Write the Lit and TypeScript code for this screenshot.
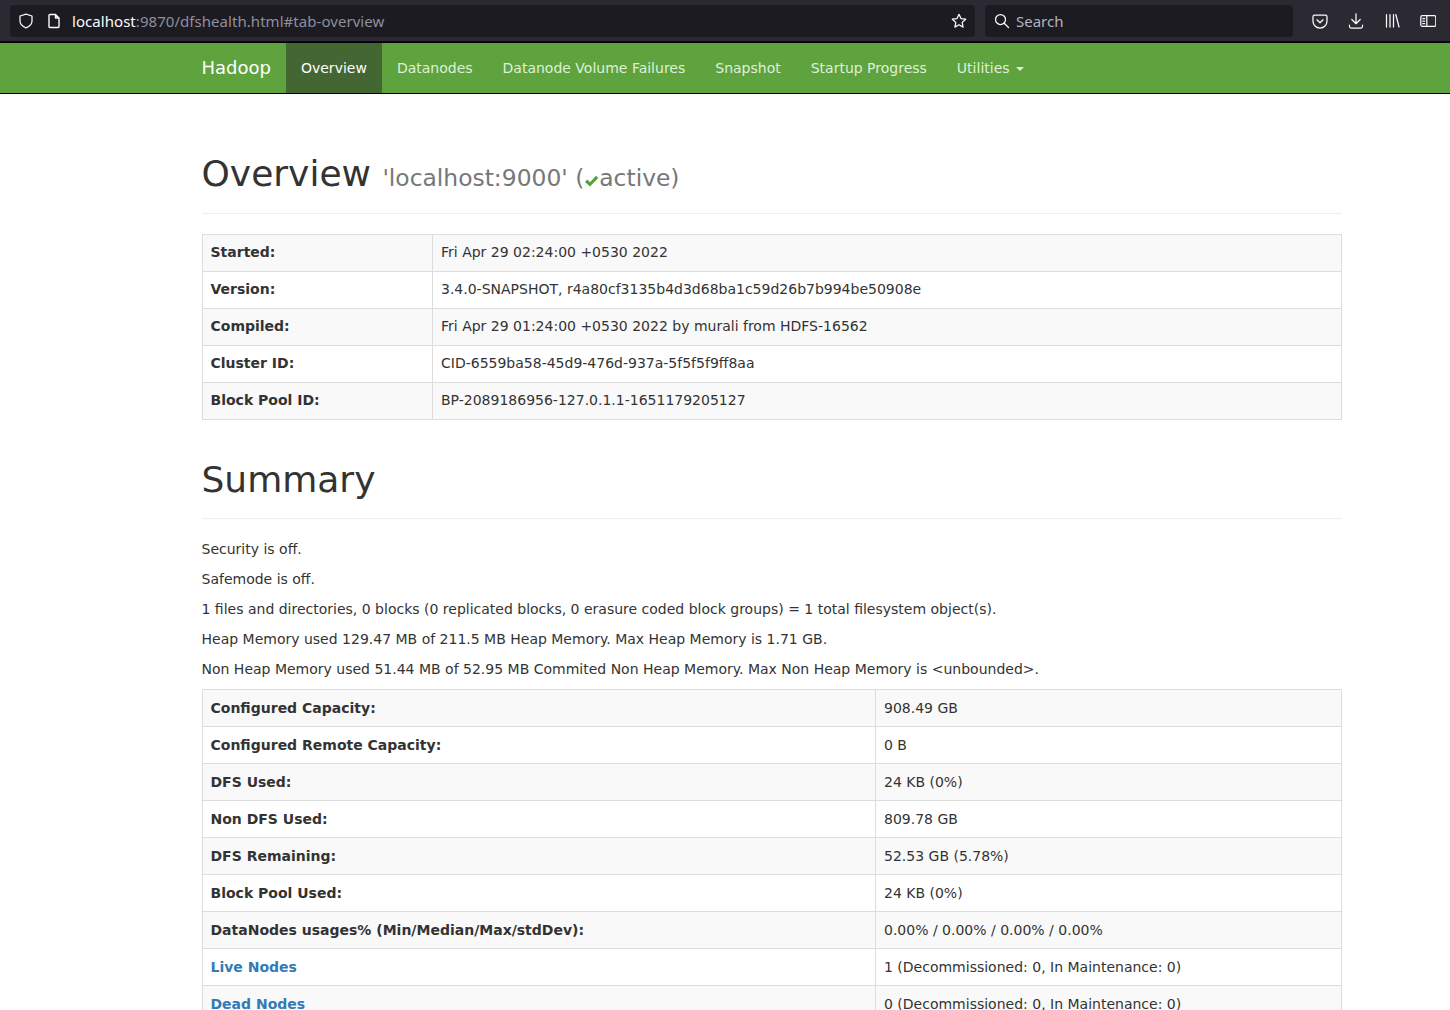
import { LitElement, html, css, svg } from "lit";
import { customElement } from "lit/decorators.js";

const overview: [string, string][] = [
  ["Started:", "Fri Apr 29 02:24:00 +0530 2022"],
  ["Version:", "3.4.0-SNAPSHOT, r4a80cf3135b4d3d68ba1c59d26b7b994be50908e"],
  ["Compiled:", "Fri Apr 29 01:24:00 +0530 2022 by murali from HDFS-16562"],
  ["Cluster ID:", "CID-6559ba58-45d9-476d-937a-5f5f5f9ff8aa"],
  ["Block Pool ID:", "BP-2089186956-127.0.1.1-1651179205127"],
];
const summary: [string, string, boolean?][] = [
  ["Configured Capacity:", "908.49 GB"],
  ["Configured Remote Capacity:", "0 B"],
  ["DFS Used:", "24 KB (0%)"],
  ["Non DFS Used:", "809.78 GB"],
  ["DFS Remaining:", "52.53 GB (5.78%)"],
  ["Block Pool Used:", "24 KB (0%)"],
  ["DataNodes usages% (Min/Median/Max/stdDev):", "0.00% / 0.00% / 0.00% / 0.00%"],
  ["Live Nodes", "1 (Decommissioned: 0, In Maintenance: 0)", true],
  ["Dead Nodes", "0 (Decommissioned: 0, In Maintenance: 0)", true],
];
const lines = [
  "Security is off.",
  "Safemode is off.",
  "1 files and directories, 0 blocks (0 replicated blocks, 0 erasure coded block groups) = 1 total filesystem object(s).",
  "Heap Memory used 129.47 MB of 211.5 MB Heap Memory. Max Heap Memory is 1.71 GB.",
  "Non Heap Memory used 51.44 MB of 52.95 MB Commited Non Heap Memory. Max Non Heap Memory is <unbounded>.",
];
const navs = ["Datanodes", "Datanode Volume Failures", "Snapshot", "Startup Progress"];

const icon = (w: number, body: unknown) =>
  html`<svg class="ic" width=${w} height="16" viewBox="0 0 ${w} 16" fill="none" stroke="#fbfbfe" stroke-width="1.25" stroke-linecap="round" stroke-linejoin="round">${body}</svg>`;

@customElement("app-root")
export class AppRoot extends LitElement {
  static styles = css`
    :host { display: block; height: 1010px; overflow: hidden; background: #fff; color: #333;
      font-family: "DejaVu Sans", sans-serif; font-size: 14px; line-height: 20px; }
    .chrome { height: 42px; background: #2b2a33; display: flex; align-items: flex-start; box-sizing: border-box; padding: 5px 0 0 10px; border-bottom: 1px solid #0c0c0d; }
    .urlbar, .search { height: 32px; background: #1c1b22; border-radius: 4px; display: flex; align-items: center; box-sizing: border-box;
      font-family: "Noto Sans", "Open Sans", sans-serif; font-size: 15px; line-height: 20px; }
    .urlbar { width: 965px; padding: 0 8px; }
    .search { width: 308px; margin-left: 10px; padding: 0 9px; color: #b4b4bb; }
    .search .ic { margin-right: 6px; }
    .url { margin-left: 10px; color: #fbfbfe; flex: 1; letter-spacing: 0.05px; }
    .url span { color: #8f8f9d; }
    .doc { margin-left: 12px; }
    .tools { display: flex; margin-left: 19px; gap: 20px; height: 32px; align-items: center; }
    nav { height: 50px; background: #5fa33e; border-top: 1px solid #000; border-bottom: 1px solid #000; display: flex; padding-left: 186.5px; }
    nav a { display: block; padding: 15px; color: #dff0d8; }
    nav .brand { font-size: 18px; color: #fff; }
    nav .active { background: #446633; color: #fff; }
    .caret { display: inline-block; width: 0; height: 0; margin-left: 2px; vertical-align: middle;
      border-top: 4px solid #dff0d8; border-left: 4px solid transparent; border-right: 4px solid transparent; }
    main { width: 1140px; margin-left: 201.5px; }
    .header { border-bottom: 1px solid #eee; box-sizing: border-box; }
    .h1 { margin: 0; font-size: 36px; font-weight: 500; line-height: 40px; }
    .h1 small { font-size: 23.4px; font-weight: 400; color: #777; line-height: 1; }
    .one { height: 120px; padding-top: 60px; margin-bottom: 20px; }
    .two { height: 99px; padding-top: 40px; margin-bottom: 20px; }
    .check { display: inline-block; vertical-align: -2px; }
    p { margin: 0 0 10px; }
    table { width: 1140px; table-layout: fixed; border-collapse: collapse; border: 1px solid #ddd; margin-bottom: 20px; }
    td, th { border: 1px solid #ddd; padding: 8px; text-align: left; line-height: 20px; }
    td { padding-left: 8.5px; }
    th { font-weight: 700; }
    tbody tr:nth-child(odd) { background: #f9f9f9; }
    .t1 { margin-bottom: 0; }
    .t1 td, .t1 th { padding-top: 7px; padding-bottom: 9px; }
    .link { color: #337ab7; }
  `;

  render() {
    return html`
      <div class="chrome">
        <div class="urlbar">
          ${icon(16, svg`<path d="M8 1.2 L14 3 V8 C14 11 11.5 13.5 8 14.8 C4.5 13.5 2 11 2 8 V3 Z"/>`)}
          <svg class="ic doc" width="16" height="16" viewBox="0 0 16 16" fill="none" stroke="#fbfbfe" stroke-width="1.4" stroke-linejoin="round"><path d="M3 2.5 Q3 1.5 4 1.5 H9.5 L13 5 V13.5 Q13 14.5 12 14.5 H4 Q3 14.5 3 13.5 Z M9.5 1.5 V5 H13"/></svg>
          <div class="url">localhost<span>:9870/dfshealth.html#tab-overview</span></div>
          ${icon(16, svg`<path d="M8 1.3 L10 5.6 L14.7 6.2 L11.2 9.4 L12.1 14.1 L8 11.8 L3.9 14.1 L4.8 9.4 L1.3 6.2 L6 5.6 Z"/>`)}
        </div>
        <div class="search">
          ${icon(16, svg`<circle cx="6.5" cy="6.5" r="5"/><path d="M10.2 10.2 L14.5 14.5"/>`)}
          Search
        </div>
        <div class="tools">
          ${icon(16, svg`<path d="M2.5 2 H13.5 Q15 2 15 3.5 V8 C15 12 12 15 8 15 C4 15 1 12 1 8 V3.5 Q1 2 2.5 2 Z M5 6.8 L8 9.8 L11 6.8"/>`)}
          ${icon(16, svg`<path d="M8 0.8 V10.5 M3.8 6.5 L8 10.7 L12.2 6.5 M1.5 12 V13.5 Q1.5 15 3 15 H13 Q14.5 15 14.5 13.5 V12"/>`)}
          ${icon(16, svg`<path d="M2.5 1.5 V14 M6 1.5 V14 M9.5 1.5 V14 M11.8 1.5 L15 14"/>`)}
          ${icon(16, svg`<rect x="0.8" y="2.7" width="15" height="10.6" rx="1.5"/><path d="M6.8 2.7 V13.3 M2.8 5.5 H4.6 M2.8 8 H4.6 M2.8 10.5 H4.6"/>`)}
        </div>
      </div>
      <nav>
        <a class="brand">Hadoop</a>
        <a class="active">Overview</a>
        ${navs.map((n) => html`<a>${n}</a>`)}
        <a>Utilities <span class="caret"></span></a>
      </nav>
      <main>
        <div class="header one">
          <h1 class="h1">Overview <small>'localhost:9000' (<svg class="check" width="15" height="14" viewBox="0 0 15 14"><path fill="#4ca63c" d="M1 8 L3.3 5.6 L6 8.2 L12 1.8 L14.3 4 L6 12.6 Z"/></svg>active)</small></h1>
        </div>
        <table class="t1">
          <colgroup><col style="width:230px" /><col /></colgroup>
          <tbody>${overview.map(([k, v]) => html`<tr><th>${k}</th><td>${v}</td></tr>`)}</tbody>
        </table>
        <div class="header two"><h1 class="h1">Summary</h1></div>
        ${lines.map((l) => html`<p>${l}</p>`)}
        <table>
          <colgroup><col style="width:673px" /><col /></colgroup>
          <tbody>${summary.map(([k, v, link]) => html`<tr><th class=${link ? "link" : ""}>${k}</th><td>${v}</td></tr>`)}</tbody>
        </table>
      </main>
    `;
  }
}
